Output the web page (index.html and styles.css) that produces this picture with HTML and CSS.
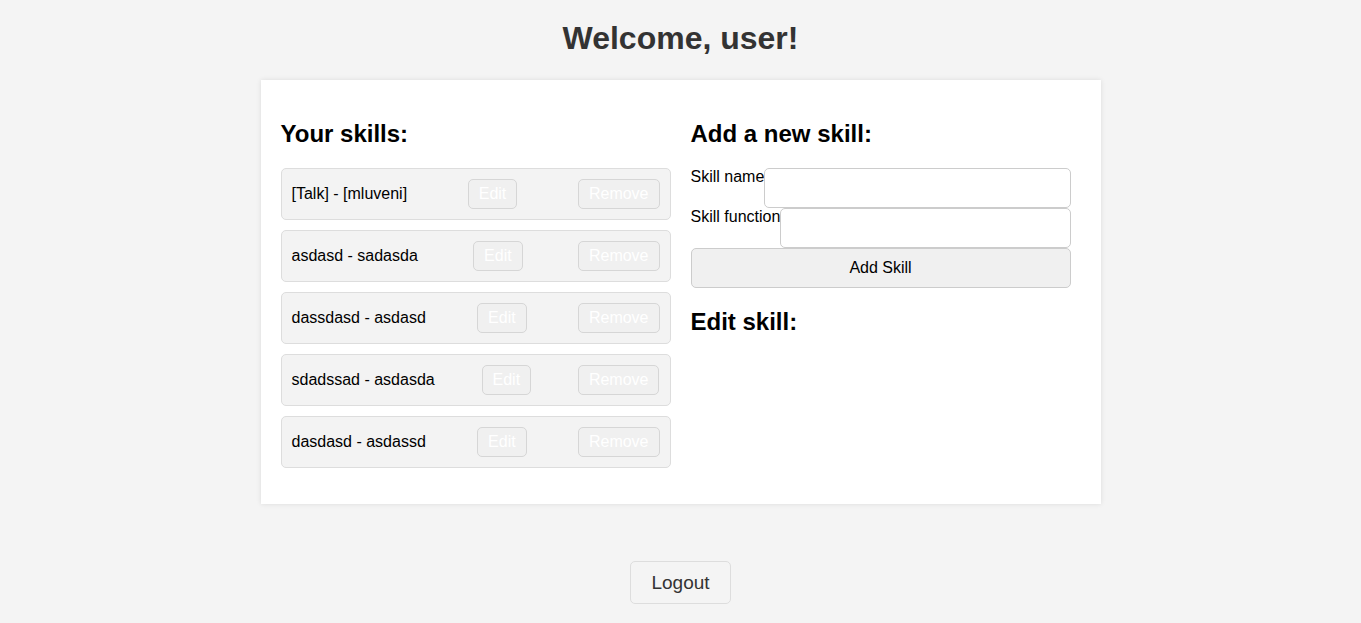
FILE: index.html
```html
<!DOCTYPE html>
<html>
<head>
<meta charset="utf-8">
<title>Skills</title>
<link rel="stylesheet" href="styles.css">
</head>
<body>
<h1 class="title">Welcome, user!</h1>
<div class="card">
  <div class="col-left">
    <h2 class="section-title">Your skills:</h2>
    <ul class="skill-list">
      <li class="skill-item"><span class="skill-text">[Talk] - [mluveni]</span><button class="btn-small">Edit</button><button class="btn-small">Remove</button></li>
      <li class="skill-item"><span class="skill-text">asdasd - sadasda</span><button class="btn-small">Edit</button><button class="btn-small">Remove</button></li>
      <li class="skill-item"><span class="skill-text">dassdasd - asdasd</span><button class="btn-small">Edit</button><button class="btn-small">Remove</button></li>
      <li class="skill-item"><span class="skill-text">sdadssad - asdasda</span><button class="btn-small">Edit</button><button class="btn-small">Remove</button></li>
      <li class="skill-item"><span class="skill-text">dasdasd - asdassd</span><button class="btn-small">Edit</button><button class="btn-small">Remove</button></li>
    </ul>
  </div>
  <div class="col-right">
    <h2 class="section-title">Add a new skill:</h2>
    <form class="skill-form">
      <div class="form-row"><label class="form-label">Skill name</label><input class="form-input" type="text"></div>
      <div class="form-row"><label class="form-label">Skill function</label><input class="form-input" type="text"></div>
      <button class="btn-add" type="button">Add Skill</button>
    </form>
    <h2 class="section-title">Edit skill:</h2>
  </div>
</div>
<div class="logout-wrap"><button class="btn-logout">Logout</button></div>
</body>
</html>
```
FILE: styles.css
```css
html, body {
  margin: 0;
  padding: 0;
}
body {
  background: #f4f4f4;
  font-family: "Liberation Sans", Arial, sans-serif;
  color: #000;
}
.title {
  text-align: center;
  font-size: 32px;
  font-weight: bold;
  color: #333;
  margin: 0;
  padding: 20px 0 23px;
  line-height: 37px;
}
.card {
  width: 800px;
  margin: 0 auto;
  background: #fff;
  padding: 20px;
  box-shadow: 0 0 5px rgba(0, 0, 0, 0.1);
  display: flex;
  gap: 20px;
  align-items: flex-start;
}
.col-left {
  width: 390px;
}
.col-right {
  width: 380px;
}
.section-title {
  font-size: 24px;
  font-weight: bold;
  margin: 20px 0;
  line-height: 28px;
}
.skill-list {
  list-style: none;
  padding: 0;
  margin: 16px 0;
}
.skill-item {
  display: flex;
  justify-content: space-between;
  align-items: center;
  background: #f3f3f3;
  border: 1px solid #dddddd;
  border-radius: 5px;
  padding: 10px;
  margin-bottom: 10px;
  height: 30px;
}
.skill-text {
  font-size: 16px;
}
.btn-small {
  font-family: "Liberation Sans", Arial, sans-serif;
  font-size: 16px;
  line-height: 18px;
  padding: 5px 10px;
  background: #f0f0f0;
  border: 1px solid #d6d6d6;
  border-radius: 5px;
  color: #fff;
}
.skill-form {
  display: flex;
  flex-direction: column;
}
.form-row {
  display: flex;
}
.form-label {
  font-size: 16px;
  line-height: 18px;
}
.form-input {
  flex: 1;
  min-width: 0;
  height: 40px;
  box-sizing: border-box;
  padding: 10px;
  font-size: 16px;
  border: 1px solid #cccccc;
  border-radius: 5px;
  margin: 0;
}
.btn-add {
  height: 40px;
  font-family: "Liberation Sans", Arial, sans-serif;
  font-size: 16px;
  background: #f0f0f0;
  border: 1px solid #cccccc;
  border-radius: 5px;
  color: #000;
  margin: 0;
}
.logout-wrap {
  display: flex;
  justify-content: center;
  padding-top: 57px;
}
.btn-logout {
  font-family: "Liberation Sans", Arial, sans-serif;
  font-size: 19px;
  line-height: 21px;
  padding: 10px 20px;
  background: #f4f4f4;
  border: 1px solid #dddddd;
  border-radius: 5px;
  color: #333;
}
```
